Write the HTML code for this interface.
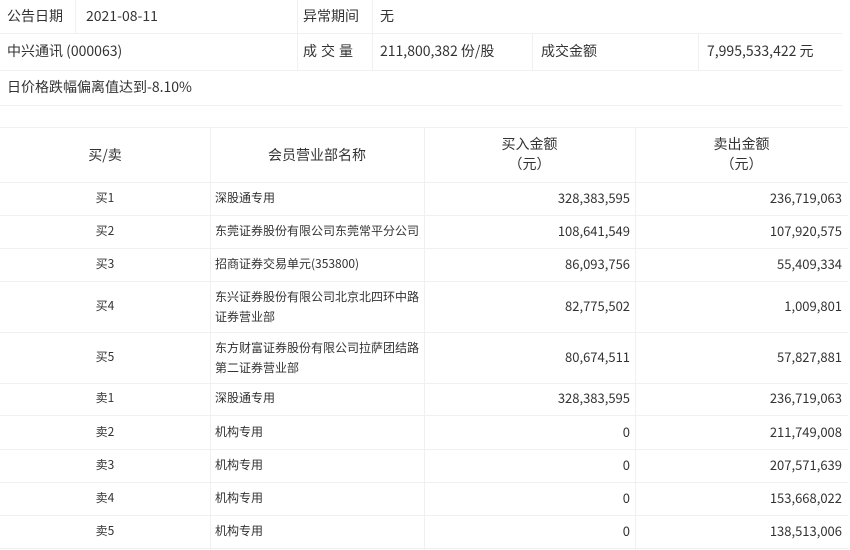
<!DOCTYPE html>
<html><head><meta charset="utf-8"><style>
body{margin:0;background:#fff;width:850px;height:550px;overflow:hidden;font-family:"Noto Sans CJK SC","Liberation Sans",sans-serif;font-size:14px;color:#333;position:relative}
.t{position:absolute;white-space:nowrap;line-height:20px}
.s{font-size:12px}
.n{font-size:13px}
.h{position:absolute;height:1px;background:#f0f0f0}
.v{position:absolute;width:1px;background:#f0f0f0}
.c{text-align:center}
.r{text-align:right}
</style></head><body>
<div class="h" style="left:0;top:33px;width:842px"></div>
<div class="h" style="left:0;top:70px;width:842px"></div>
<div class="h" style="left:0;top:105px;width:842px"></div>
<div class="v" style="left:75px;top:0;height:33px"></div>
<div class="v" style="left:297px;top:0;height:70px"></div>
<div class="v" style="left:372px;top:0;height:70px"></div>
<div class="v" style="left:532px;top:33px;height:37px"></div>
<div class="v" style="left:698px;top:33px;height:37px"></div>

<div class="t" style="left:7px;top:6px">公告日期</div>
<div class="t" style="left:86px;top:6px">2021-08-11</div>
<div class="t" style="left:303px;top:6px">异常期间</div>
<div class="t" style="left:380px;top:6px">无</div>
<div class="t" style="left:7px;top:41px">中兴通讯 (000063)</div>
<div class="t" style="left:303px;top:41px;letter-spacing:4px">成交量</div>
<div class="t" style="left:380px;top:41px">211,800,382 份/股</div>
<div class="t" style="left:541px;top:41px">成交金额</div>
<div class="t" style="left:707px;top:41px">7,995,533,422 元</div>
<div class="t" style="left:7px;top:77px">日价格跌幅偏离值达到-8.10%</div>

<div class="h" style="left:0;top:127px;width:848px"></div>
<div class="h" style="left:0;top:182px;width:848px"></div>
<div class="h" style="left:0;top:215px;width:848px"></div>
<div class="h" style="left:0;top:248px;width:848px"></div>
<div class="h" style="left:0;top:281px;width:848px"></div>
<div class="h" style="left:0;top:332px;width:848px"></div>
<div class="h" style="left:0;top:383px;width:848px"></div>
<div class="h" style="left:0;top:415px;width:848px"></div>
<div class="h" style="left:0;top:449px;width:848px"></div>
<div class="h" style="left:0;top:482px;width:848px"></div>
<div class="h" style="left:0;top:515px;width:848px"></div>
<div class="h" style="left:0;top:548px;width:848px"></div>
<div class="v" style="left:210px;top:127px;height:423px"></div>
<div class="v" style="left:424px;top:127px;height:423px"></div>
<div class="v" style="left:635px;top:127px;height:423px"></div>

<div class="t c" style="left:0;width:210px;top:145px">买/卖</div>
<div class="t c" style="left:210px;width:214px;top:145px">会员营业部名称</div>
<div class="t c" style="left:424px;width:211px;top:134px">买入金额<br>（元）</div>
<div class="t c" style="left:635px;width:213px;top:134px">卖出金额<br>（元）</div>

<div class="t c s" style="left:0;width:210px;top:188px">买1</div>
<div class="t s" style="left:215px;top:188px">深股通专用</div>
<div class="t r n" style="left:424px;width:206px;top:188px">328,383,595</div>
<div class="t r n" style="left:635px;width:207px;top:188px">236,719,063</div>

<div class="t c s" style="left:0;width:210px;top:221px">买2</div>
<div class="t s" style="left:215px;top:221px">东莞证券股份有限公司东莞常平分公司</div>
<div class="t r n" style="left:424px;width:206px;top:221px">108,641,549</div>
<div class="t r n" style="left:635px;width:207px;top:221px">107,920,575</div>

<div class="t c s" style="left:0;width:210px;top:254px">买3</div>
<div class="t s" style="left:215px;top:254px">招商证券交易单元(353800)</div>
<div class="t r n" style="left:424px;width:206px;top:254px">86,093,756</div>
<div class="t r n" style="left:635px;width:207px;top:254px">55,409,334</div>

<div class="t c s" style="left:0;width:210px;top:296px">买4</div>
<div class="t s" style="left:215px;top:287px">东兴证券股份有限公司北京北四环中路<br>证券营业部</div>
<div class="t r n" style="left:424px;width:206px;top:296px">82,775,502</div>
<div class="t r n" style="left:635px;width:207px;top:296px">1,009,801</div>

<div class="t c s" style="left:0;width:210px;top:347px">买5</div>
<div class="t s" style="left:215px;top:338px">东方财富证券股份有限公司拉萨团结路<br>第二证券营业部</div>
<div class="t r n" style="left:424px;width:206px;top:347px">80,674,511</div>
<div class="t r n" style="left:635px;width:207px;top:347px">57,827,881</div>

<div class="t c s" style="left:0;width:210px;top:388px">卖1</div>
<div class="t s" style="left:215px;top:388px">深股通专用</div>
<div class="t r n" style="left:424px;width:206px;top:388px">328,383,595</div>
<div class="t r n" style="left:635px;width:207px;top:388px">236,719,063</div>

<div class="t c s" style="left:0;width:210px;top:422px">卖2</div>
<div class="t s" style="left:215px;top:422px">机构专用</div>
<div class="t r n" style="left:424px;width:206px;top:422px">0</div>
<div class="t r n" style="left:635px;width:207px;top:422px">211,749,008</div>

<div class="t c s" style="left:0;width:210px;top:455px">卖3</div>
<div class="t s" style="left:215px;top:455px">机构专用</div>
<div class="t r n" style="left:424px;width:206px;top:455px">0</div>
<div class="t r n" style="left:635px;width:207px;top:455px">207,571,639</div>

<div class="t c s" style="left:0;width:210px;top:488px">卖4</div>
<div class="t s" style="left:215px;top:488px">机构专用</div>
<div class="t r n" style="left:424px;width:206px;top:488px">0</div>
<div class="t r n" style="left:635px;width:207px;top:488px">153,668,022</div>

<div class="t c s" style="left:0;width:210px;top:521px">卖5</div>
<div class="t s" style="left:215px;top:521px">机构专用</div>
<div class="t r n" style="left:424px;width:206px;top:521px">0</div>
<div class="t r n" style="left:635px;width:207px;top:521px">138,513,006</div>
</body></html>
